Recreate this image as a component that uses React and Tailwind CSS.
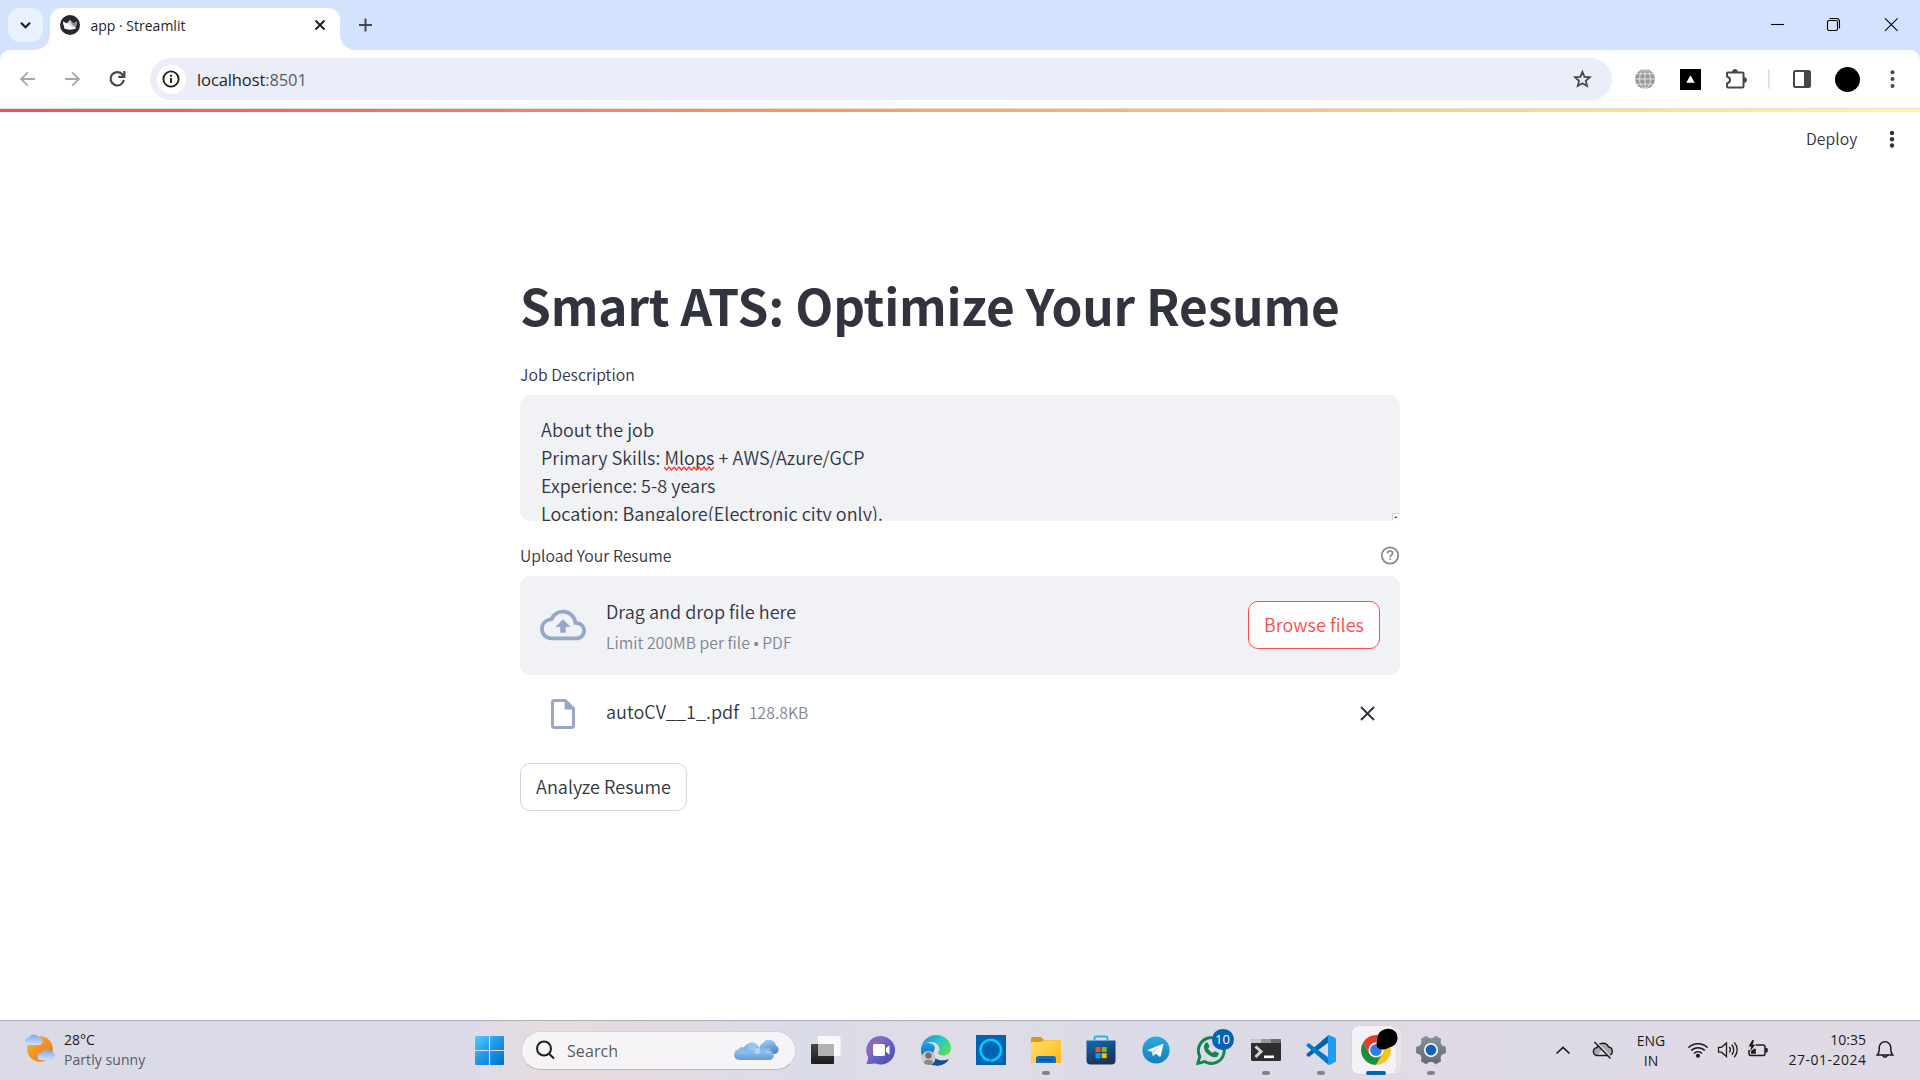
import React from "react";

/* ---------- Browser chrome ---------- */

function TabStrip() {
  return (
    <div className="flex h-[50px] bg-[#d3e3fd]">
      <div className="mt-2 ml-2 flex h-[34px] w-[35px] items-center justify-center rounded-xl bg-[#e9f0fe]">
        <svg className="h-[35px] w-[35px]" viewBox="0 0 35 35" fill="none" stroke="#1f1f1f" strokeWidth="2.2">
          <path d="M13 14.8l4.5 4.5 4.5-4.5" />
        </svg>
      </div>
      <div className="relative mt-2 ml-[7px] flex h-[42px] w-[290px] items-center rounded-t-xl bg-white pb-2">
        <svg className="absolute bottom-0 -left-[15px] h-[15px] w-[15px]" viewBox="0 0 15 15">
          <path d="M15 0v15H0C8 15 15 8 15 0z" fill="#fff" />
        </svg>
        <svg className="absolute -right-[15px] bottom-0 h-[15px] w-[15px]" viewBox="0 0 15 15">
          <path d="M0 0v15h15C7 15 0 8 0 0z" fill="#fff" />
        </svg>
        <svg className="ml-[10px] h-5 w-5 shrink-0" viewBox="0 0 20 20">
          <circle cx="10" cy="10" r="10" fill="#262730" />
          <path d="M2.8 6.6l4 2L10 4.8l3.2 3.8 4-2-1.9 7.2q-5.3 1.4-10.6 0z" fill="#d9d9d9" />
          <path d="M10 4.8l3.2 3.8 4-2-1.4 5.3C12 10.8 11 8 10 4.8z" fill="#8f8f93" />
          <path d="M2.8 6.6l4 2L12 12l3.6.6-.3 1.2q-5.3 1.4-10.6 0z" fill="#fff" />
        </svg>
        <span className="ml-[10.5px] w-[220px] pt-[2px] font-['Open_Sans',sans-serif] text-sm leading-5 text-[#1f1f1f]">
          app · Streamlit
        </span>
        <svg className="h-[18px] w-[18px] shrink-0" viewBox="0 0 18 18" stroke="#1f1f1f" strokeWidth="1.9">
          <path d="M4.5 4.5l9 9M13.5 4.5l-9 9" />
        </svg>
      </div>
      <svg className="mt-[15px] ml-[15px] h-5 w-5" viewBox="0 0 20 20" stroke="#474747" strokeWidth="2">
        <path d="M4 10h13M10.5 3.5v13" />
      </svg>
      <svg className="mt-[14px] ml-auto h-[22px] w-[150px]" viewBox="0 0 150 22" fill="none" stroke="#000" strokeWidth="1.1">
        <path d="M1 10.5h13" />
        <rect x="57.5" y="6.5" width="10" height="10" rx="1.5" />
        <path d="M59.5 4.5h7a3 3 0 0 1 3 3v7" />
        <path d="M115 4.3l12.6 12.6M127.6 4.3L115 16.9" />
      </svg>
    </div>
  );
}

function Toolbar() {
  return (
    <div className="bg-[#d3e3fd]">
      <div className="flex h-[58px] items-center rounded-t-[10px] bg-white">
        <svg className="ml-[17px] h-5 w-5" viewBox="0 0 20 20" fill="none" stroke="#a9a9a9" strokeWidth="1.9">
          <path d="M18 10H4.5M10.8 3.3L4.1 10l6.7 6.7" />
        </svg>
        <svg className="ml-[25px] h-5 w-5" viewBox="0 0 20 20" fill="none" stroke="#a9a9a9" strokeWidth="1.9">
          <path d="M3 10h13.5M10.2 3.3l6.7 6.7-6.7 6.7" />
        </svg>
        <svg className="ml-[25px] h-5 w-5" viewBox="0 0 20 20" fill="none" stroke="#474747" strokeWidth="2.2">
          <path d="M16.9 10.9a6.7 6.7 0 1 1-1.7-5.7l1.5 1.7" />
          <path d="M17.3 2v5.9h-6" />
        </svg>
        <div className="ml-[23px] flex h-[42px] w-[1462px] items-center rounded-full bg-[#ebeef8]">
          <div className="ml-[6.5px] flex h-[29px] w-[29px] items-center justify-center rounded-full bg-white">
            <svg className="h-[18px] w-[18px]" viewBox="0 0 18 18" fill="none" stroke="#1f1f1f" strokeWidth="1.9">
              <circle cx="9" cy="9" r="7.6" />
              <path d="M9 8v5M9 4.8v1.9" />
            </svg>
          </div>
          <span className="ml-[11.5px] pt-[2px] font-['Open_Sans',sans-serif] text-[16.5px] leading-6 tracking-[-0.1px] text-[#1f1f1f]">
            localhost<span className="text-[#5a5d63]">:8501</span>
          </span>
          <svg className="mr-[20px] ml-auto h-5 w-5" viewBox="0 0 20 20" fill="none" stroke="#474747" strokeWidth="1.8">
            <path d="M10.4 2.9l2.1 4.9 5.3.46-4 3.5 1.2 5.2-4.6-2.77-4.6 2.77 1.2-5.2-4-3.5 5.3-.46z" />
          </svg>
        </div>
        <svg className="ml-[23px] h-5 w-5" viewBox="0 0 20 20" fill="none">
          <circle cx="10" cy="10" r="10" fill="#999" />
          <g stroke="#e3e3e3" strokeWidth="1">
            <path d="M10 0v20M0 10h20M2 4.8h16M2 15.2h16" />
            <ellipse cx="10" cy="10" rx="5.4" ry="9.6" />
          </g>
        </svg>
        <svg className="ml-[25px] h-[21px] w-[21px]" viewBox="0 0 21 21">
          <path d="M0 0h21v21H0z" fill="#000" />
          <path d="M10.5 6.2l4.2 7.5H6.3z" fill="#fff" />
        </svg>
        <svg className="ml-[24px] h-[22px] w-[22px]" viewBox="0 0 22 22">
          <path
            d="M2.5 4.5H17.5a1 1 0 0 1 1 1V18.5a1 1 0 0 1-1 1H3a1 1 0 0 1-1-1V15.5C6 14.5 6 9.5 2 8.5V5.5a1 1 0 0 1 .5-1z"
            fill="none"
            stroke="#474747"
            strokeWidth="2"
          />
          <path d="M7.5 4a2.5 2.5 0 0 1 5 0zM19 9.5a2.5 2.5 0 0 1 0 5z" fill="#474747" stroke="#474747" />
        </svg>
        <div className="ml-[21px] h-5 w-[2px] rounded-full bg-[#d3e3fd]" />
        <svg className="ml-[23px] h-[18px] w-[18px]" viewBox="0 0 18 18">
          <rect x="1" y="1" width="16" height="16" rx="1.5" fill="none" stroke="#474747" strokeWidth="2" />
          <path d="M11 1h6v16h-6z" fill="#474747" />
        </svg>
        <div className="ml-[24px] h-[25px] w-[25px] rounded-full bg-black" />
        <svg className="ml-[22px] h-5 w-5" viewBox="0 0 20 20" fill="#474747">
          <circle cx="10.5" cy="3.2" r="2" />
          <circle cx="10.5" cy="10" r="2" />
          <circle cx="10.5" cy="16.9" r="2" />
        </svg>
      </div>
    </div>
  );
}

/* ---------- Streamlit app ---------- */

function AppHeader() {
  return (
    <div className="flex h-[54px] items-center text-[#31333f]">
      <span className="ml-[1806px] text-[15.75px] leading-6 font-[350] tracking-[0.08px]">Deploy</span>
      <svg className="ml-[24px] h-5 w-5" viewBox="0 0 20 20" fill="#31333f">
        <circle cx="11" cy="4" r="2.2" />
        <circle cx="11" cy="10.3" r="2.2" />
        <circle cx="11" cy="16.5" r="2.2" />
      </svg>
    </div>
  );
}

function JobDescription() {
  return (
    <div className="relative h-[126px] overflow-hidden rounded-[10px] bg-[#f0f2f6] pt-[20px] pl-[21px] text-[18px] leading-[28px] tracking-[0.05px]">
      <div>About the job</div>
      <div>
        Primary Skills:{" "}
        <span className="relative">
          Mlops
          <svg className="absolute top-[22px] left-0 h-[5px] w-[50px]" viewBox="0 0 50 5" fill="none" stroke="#f33" strokeWidth="1.2">
            <path d="M0 1l2.5 3L5 1l2.5 3L10 1l2.5 3L15 1l2.5 3L20 1l2.5 3L25 1l2.5 3L30 1l2.5 3L35 1l2.5 3L40 1l2.5 3L45 1l2.5 3L50 1" />
          </svg>
        </span>{" "}
        + AWS/Azure/GCP
      </div>
      <div>Experience: 5-8 years</div>
      <div>Location: Bangalore(Electronic city only).</div>
      <svg className="absolute right-0 bottom-0 h-2 w-2" viewBox="0 0 8 8">
        <path d="M0 0h8v3Q8 8 3 8H0z" fill="#fff" />
        <path d="M.5 8V.5H8" fill="none" stroke="#cfd0d4" />
        <path d="M2 5l1.5-1.5H5.5L4 5z" fill="#333" />
      </svg>
    </div>
  );
}

function Uploader() {
  return (
    <>
      <div className="mt-[21px] flex h-[26px] items-center">
        <span className="pt-[2px] text-[15.75px] leading-[26px] tracking-[0.03px]">Upload Your Resume</span>
        <svg className="ml-auto h-5 w-5" viewBox="0 0 20 20" fill="none" stroke="#84868f" strokeWidth="1.7">
          <circle cx="10" cy="10.5" r="8.2" />
          <path d="M7.4 8.3c.2-1.5 1.2-2.3 2.6-2.3s2.6.8 2.6 2.2c0 1.900-2.5 2-2.5 4M10.1 13.400v1.7" />
        </svg>
      </div>
      <div className="mt-2 flex h-[99px] items-center rounded-[10px] bg-[#f0f2f6] px-5 pb-px">
        <svg className="h-[46px] w-[46px]" viewBox="0 0 24 24" fill="#98a6c8">
          <path d="M19.35 10.04A7.49 7.49 0 0 0 12 4C9.11 4 6.6 5.64 5.35 8.04A5.994 5.994 0 0 0 0 14c0 3.31 2.69 6 6 6h13c2.76 0 5-2.24 5-5 0-2.64-2.05-4.78-4.65-4.96zM19 18H6c-2.21 0-4-1.79-4-4 0-2.05 1.53-3.76 3.56-3.97l1.07-.11.5-.95A5.469 5.469 0 0 1 12 6c2.62 0 4.88 1.86 5.39 4.43l.3 1.5 1.53.11A2.98 2.98 0 0 1 22 15c0 1.65-1.35 3-3 3zM8 13h2.55v3h2.9v-3H16l-4-4z" />
        </svg>
        <div className="ml-5 pt-[2px]">
          <div className="text-[18px] leading-[28px] tracking-[0.05px]">Drag and drop file here</div>
          <div className="mt-[5px] text-[15.75px] leading-[25px] tracking-[0.03px] text-[#808495]">
            Limit 200MB per file <span className="font-['Noto_Sans',sans-serif] text-[14px] font-semibold">•</span> PDF
          </div>
        </div>
        <div className="ml-auto flex h-[48px] w-[132px] items-center justify-center rounded-[10px] border border-[#ff4b4b] bg-white pb-[2px] text-[18px] leading-[28px] tracking-[0.05px] text-[#ff4b4b]">
          Browse files
        </div>
      </div>
      <div className="mt-[19px] flex h-[40px] items-center px-5">
        <svg className="ml-[5px] h-[36px] w-[36px]" viewBox="0 0 24 24" fill="#98a6c8">
          <path d="M14 2H6c-1.1 0-1.99.9-1.99 2L4 20c0 1.1.89 2 1.99 2H18c1.1 0 2-.9 2-2V8l-6-6zM6 20V4h7v5h5v11H6z" />
        </svg>
        <div className="ml-[25px] flex items-baseline pb-[5px] leading-[28px]">
          <span className="text-[18px] tracking-[0.04px]">autoCV__1_.pdf</span>
          <span className="ml-[10px] text-[15.75px] tracking-[0.04px] text-[#808495]">128.8KB</span>
        </div>
        <svg className="mr-[2.5px] ml-auto h-5 w-5" viewBox="0 0 20 20" stroke="#31333f" strokeWidth="2">
          <path d="M3 3l13 13M16 3L3 16" />
        </svg>
      </div>
      <div className="mt-[29px] flex h-[48px] w-[167px] items-center justify-center rounded-[10px] border border-[#d6d6d9] bg-white pb-[2px] text-[18px] leading-[28px] tracking-[0.05px]">
        Analyze Resume
      </div>
    </>
  );
}

/* ---------- Windows taskbar ---------- */

function AppSlot({ children, mark }) {
  return (
    <div className="relative flex w-[55px] items-center justify-center">
      {children}
      {mark && <div className="absolute bottom-[3px] left-[23.5px] h-1 w-2 rounded-full bg-[#85828c]" />}
    </div>
  );
}

function Weather() {
  return (
    <div className="flex w-[475px] items-start">
      <svg className="mt-[10px] ml-[25px] h-[34px] w-[32px]" viewBox="0 0 32 34">
        <defs>
          <linearGradient id="sun" x1="0" y1="0" x2="1" y2="1">
            <stop offset="0" stopColor="#f5b62a" />
            <stop offset="1" stopColor="#f0701c" />
          </linearGradient>
          <linearGradient id="cloud" x1="0" y1="0" x2="0" y2="1">
            <stop offset="0" stopColor="#7ea8ea" />
            <stop offset="1" stopColor="#cfe0fa" />
          </linearGradient>
        </defs>
        <circle cx="15" cy="18" r="12.8" fill="url(#sun)" />
        <path d="M3.5 14a3.6 3.6 0 0 1 .3-7.3A5.3 5.3 0 0 1 13 5.6a4.3 4.3 0 0 1 1.5 8.4z" fill="url(#cloud)" />
        <path d="M16 29.2a3.6 3.6 0 0 1 .3-7.3 5.3 5.3 0 0 1 9.2-1.1 4.3 4.3 0 0 1 1.5 8.4z" fill="url(#cloud)" />
      </svg>
      <div className="mt-[9px] ml-[7px] text-sm leading-5">
        <div className="text-[#1b1b1d]">28°C</div>
        <div className="tracking-[0.06px] text-[#5c5a62]">Partly sunny</div>
      </div>
    </div>
  );
}

function SearchBox() {
  return (
    <div className="mt-[9.5px] ml-[17px] flex h-[39px] w-[275px] items-center rounded-full border border-[#d6d0da] border-b-[#bcb8c0] bg-[#f6f4f7]">
      <svg className="ml-[14px] h-5 w-5" viewBox="0 0 20 20" fill="none" stroke="#1f1f1f" strokeWidth="2">
        <circle cx="8" cy="8.5" r="7" />
        <path d="M12.8 13.5l5.2 5" />
      </svg>
      <span className="ml-[11px] pt-[2px] text-base leading-6 tracking-[0.1px] text-[#5b5a5f]">Search</span>
      <svg className="mr-[16px] ml-auto h-[24px] w-[46px]" viewBox="0 0 46 24">
        <defs>
          <linearGradient id="cl" x1="0" y1="0" x2="0.3" y2="1">
            <stop offset="0" stopColor="#a9d2f5" />
            <stop offset="1" stopColor="#4f8cc9" />
          </linearGradient>
          <linearGradient id="cl2" x1="0" y1="0" x2="0" y2="1">
            <stop offset="0" stopColor="#79b2e6" />
            <stop offset="0.55" stopColor="#8abdea" />
            <stop offset="1" stopColor="#5f9cd8" />
          </linearGradient>
        </defs>
        <path d="M27 13a6 6 0 0 1 3-8 7.2 7.2 0 0 1 13 2.5 4.5 4.5 0 0 1-1 8.5H30z" fill="url(#cl)" />
        <path d="M6 22a5.3 5.3 0 0 1-.5-10.5 4 4 0 0 1 5.5-2 8.5 8.5 0 0 1 15.5 1 5 5 0 0 1 8 2.5 4.5 4.5 0 0 1 3 9z" fill="url(#cl2)" />
        <circle cx="19" cy="8.5" r="4.5" fill="#a6d0f3" opacity=".6" />
        <circle cx="24.5" cy="13" r="3" fill="#c2dff7" opacity=".7" />
        <circle cx="35" cy="13" r="3" fill="#a6d0f3" opacity=".5" />
      </svg>
    </div>
  );
}

function PinnedApps() {
  return (
    <div className="ml-[2.5px] flex h-[57px]">
      <AppSlot>
        <svg className="h-[30px] w-[30px]" viewBox="0 0 30 30">
          <defs>
            <linearGradient id="tv" x1="0" y1="0" x2="0" y2="1">
              <stop offset="0" stopColor="#454545" />
              <stop offset="1" stopColor="#1c1c1c" />
            </linearGradient>
          </defs>
          <rect x="0" y="9" width="23" height="20" rx="1" fill="url(#tv)" />
          <rect x="7" y="1" width="22.5" height="20" rx="1" fill="#f8f8f8" />
          <path d="M7 9h16v12H8a1 1 0 0 1-1-1z" fill="#b2b2b2" />
        </svg>
      </AppSlot>
      <AppSlot>
        <svg className="h-[30px] w-[30px]" viewBox="0 0 30 30">
          <defs>
            <linearGradient id="tm" x1="0" y1="0" x2="1" y2="1">
              <stop offset="0" stopColor="#7b62b8" />
              <stop offset=".3" stopColor="#8a68c0" />
              <stop offset=".6" stopColor="#5b5fc7" />
              <stop offset="1" stopColor="#4b49a8" />
            </linearGradient>
          </defs>
          <path d="M15 1a14.3 14.3 0 1 1-5.5 27.6Q5 29.3.5 29l1.8-6.5A14.3 14.3 0 0 1 15 1z" fill="url(#tm)" />
          <rect x="7" y="9" width="12" height="12" rx="1.8" fill="#fff" />
          <path d="M20 13.3l3.5-3v9.4l-3.5-3z" fill="#fff" />
        </svg>
      </AppSlot>
      <AppSlot>
        <svg className="h-[32px] w-[32px]" viewBox="0 0 32 32">
          <defs>
            <linearGradient id="eg" x1="0" y1="0.2" x2="1" y2="0.7">
              <stop offset="0" stopColor="#1c8fd6" />
              <stop offset=".5" stopColor="#2bc3d2" />
              <stop offset="1" stopColor="#5fe04f" />
            </linearGradient>
            <linearGradient id="eb" x1="0" y1="0" x2="0" y2="1">
              <stop offset="0" stopColor="#1b9de2" />
              <stop offset="1" stopColor="#0f56a8" />
            </linearGradient>
          </defs>
          <path d="M1 15C1.5 9 8 8 12 10c4 2 3 5 1.5 8-2 5 4 9 10 8.5 4 0 5-1.5 5-1.5-2 4-7 6.5-12 6.5C7 31.5.5 24 1 15z" fill="url(#eb)" />
          <path d="M13.5 20c-1 5 5 7.5 10 6.5 3.5-.6 5-2 5-1-2 4-7 6-11.5 6-5-1-8-6-3.5-11.5z" fill="#124f96" />
          <path d="M1 14.5C2.5 5.5 9.5 1 16 1c8.5 0 15 6 15 13 0 5-3.5 7.5-7.5 7.5-3 0-5.5-1-5.5-2.5 0-1 1.5-1.5 1.5-4 0-3.5-3.5-7-9-7S1.5 12 1 14.5z" fill="url(#eg)" />
          <circle cx="8.5" cy="24" r="7" fill="#c9c9c9" />
          <circle cx="8.5" cy="21.5" r="3.2" fill="#77716e" />
          <path d="M3.8 29c0-4.5 9.4-4.5 9.4 0q-4.7 4-9.4 0z" fill="#8c8784" />
        </svg>
      </AppSlot>
      <AppSlot>
        <svg className="h-[30px] w-[30px]" viewBox="0 0 30 30">
          <path d="M0 0h30v30H0z" fill="#0063b1" />
          <path d="M13.8 25.3A10.2 10.2 0 1 1 18.3 24.7L14.5 26" fill="none" stroke="#00caff" strokeWidth="2.6" />
        </svg>
      </AppSlot>
      <AppSlot mark>
        <svg className="h-[30px] w-[30px]" viewBox="0 0 30 30">
          <defs>
            <linearGradient id="fo" x1="0" y1="0" x2="1" y2="1">
              <stop offset="0" stopColor="#ffdf70" />
              <stop offset="1" stopColor="#fdb913" />
            </linearGradient>
          </defs>
          <path d="M0 3.5A1.5 1.5 0 0 1 1.5 2H9q1.2 0 2 1l2 2h15.5A1.5 1.5 0 0 1 30 6.5V10H0z" fill="#dc9a0a" />
          <path d="M0 8q0-1 1-1h8.5q1 0 2-.7l1.5-1H30V28H0z" fill="url(#fo)" />
          <path d="M5 28v-4.5a2.5 2.5 0 0 1 2.5-2.5h15a2.5 2.5 0 0 1 2.5 2.5V28z" fill="#0f6fc0" />
          <path d="M8 25h13.5" stroke="#064a8c" strokeWidth="1.4" />
        </svg>
      </AppSlot>
      <AppSlot>
        <svg className="h-[30px] w-[30px]" viewBox="0 0 30 30">
          <defs>
            <linearGradient id="st" x1="0" y1="0" x2="0.4" y2="1">
              <stop offset="0" stopColor="#0f6ab8" />
              <stop offset="1" stopColor="#1c3257" />
            </linearGradient>
          </defs>
          <path d="M.5 5.5h29v20a4 4 0 0 1-4 4h-21a4 4 0 0 1-4-4z" fill="url(#st)" />
          <path d="M8.5 6V3a1.5 1.5 0 0 1 1.5-1.5h10A1.5 1.5 0 0 1 21.5 3v3" fill="none" stroke="#25b6ea" strokeWidth="1.8" />
          <path d="M9.5 12h5v5h-5z" fill="#f25022" />
          <path d="M15.7 12h5v5h-5z" fill="#7fba00" />
          <path d="M9.5 18.2h5v5h-5z" fill="#00a4ef" />
          <path d="M15.7 18.2h5v5h-5z" fill="#ffb900" />
        </svg>
      </AppSlot>
      <AppSlot>
        <svg className="h-[28px] w-[28px]" viewBox="0 0 28 28">
          <defs>
            <linearGradient id="tg" x1="0" y1="0" x2="0" y2="1">
              <stop offset="0" stopColor="#2fa8e0" />
              <stop offset="1" stopColor="#1380ba" />
            </linearGradient>
          </defs>
          <circle cx="14" cy="14" r="13.6" fill="url(#tg)" />
          <path d="M5.5 14l15-6q1-.3.8.8L18.8 20q-.3 1.2-1.4.5L13.5 17.6l-2 2.2q-.6.4-.8-.4L9.8 15.8 5.7 14.6q-.6-.3-.2-.6z" fill="#fff" />
          <path d="M9.8 15.8l8.2-5.3-6.2 6-.5 3.3z" fill="#b9d6e9" />
        </svg>
      </AppSlot>
      <AppSlot>
        <svg className="h-[30px] w-[30px]" viewBox="0 0 30 30">
          <path d="M1.8 28.4l2-7A12.9 12.9 0 1 1 8.6 26.6z" fill="none" stroke="#14844f" strokeWidth="2.9" />
          <path
            d="M10 7.5q1-.5 1.7.2l1.7 3.4q.2.7-1.3 2.4 1.5 3 4.7 4.5 1.7-2 2.3-1.7l3.4 1.7q.5.3.2 1.5-1 2.8-4.2 2.7C12 21.5 7.5 15.5 8 11.5q.2-2.5 2-4z"
            fill="#14844f"
          />
        </svg>
        <div className="absolute top-[8px] left-[28px] flex h-[21px] w-[22px] items-center justify-center rounded-full bg-[#0063b1] text-[13px] leading-none text-white">
          10
        </div>
      </AppSlot>
      <AppSlot mark>
        <svg className="h-[30px] w-[30px]" viewBox="0 0 30 30">
          <rect x="0" y="4" width="30" height="22" rx="1.5" fill="#2e2e2e" />
          <path d="M1.5 4H10v4H0V5.5A1.5 1.5 0 0 1 1.5 4z" fill="#c9c9c9" />
          <path d="M10 4h10v4H10z" fill="#989898" />
          <path d="M20 4h8.5A1.5 1.5 0 0 1 30 5.5V8H20z" fill="#6b6b6b" />
          <path d="M4.5 11.5l5.5 5-5.5 5.500" fill="none" stroke="#d4d4d4" strokeWidth="3" />
          <path d="M13 21.8h10" stroke="#fff" strokeWidth="2.6" />
        </svg>
      </AppSlot>
      <AppSlot mark>
        <svg className="h-[30px] w-[30px]" viewBox="0 0 30 30">
          <path d="M.6 18.9L22.5 0v7.6L3.4 21.5q-.8.5-1.5 0L.6 20.2q-.6-.7 0-1.3z" fill="#0065a9" />
          <path d="M.6 11.1L22.5 30v-7.6L3.4 8.5q-.8-.5-1.5 0L.6 9.8q-.6.7 0 1.3z" fill="#007acc" />
          <path d="M22.5.2q.5-.3 1 0l5.5 2.6q1 .5 1 1.6v21.2q0 1.1-1 1.6l-5.5 2.6q-.5.3-1 0l-1.5-1.4q1 .5 1-1V2.6q0-1.5-1-1z" fill="#1f9cf0" />
        </svg>
      </AppSlot>
      <div className="relative flex w-[55px] items-center justify-center">
        <div className="absolute top-[6px] left-[6px] h-[47px] w-[46px] rounded-md bg-[#e9e4ec] shadow-[0_0_1px_#b9b4bd]" />
        <div className="absolute top-[5px] left-[3px] h-[48px] w-[44px] rounded-md bg-[#f5f2f7] shadow-[0_0_1px_#a9a4ad]" />
        <svg className="relative -left-[0.5px] h-[30px] w-[30px]" viewBox="0 0 30 30">
          <circle cx="15" cy="15" r="15" fill="#fff" />
          <path d="M15 7.5L27.99 7.5A15 15 0 0 1 15 30L21.5 18.75z" fill="#fcc31e" />
          <path d="M21.5 18.75L15 30A15 15 0 0 1 2.01 7.5L8.5 18.75z" fill="#1e8e3e" />
          <path d="M8.5 18.75L2.01 7.5A15 15 0 0 1 27.99 7.5H15z" fill="#e33b2e" />
          <circle cx="15" cy="15" r="7.5" fill="#fff" />
          <circle cx="15" cy="15" r="5.9" fill="#2f7bea" />
        </svg>
        <svg className="absolute top-[7px] left-[26px] h-[24px] w-[24px]" viewBox="0 0 24 24">
          <path d="M13 .8C18 .3 22.5 4 22.5 9.5S19.500 18.500 14 19.500C11 21.800 6 22.200 3 20 .5 17.500 2 13.500 2.500 11 2 5 7 1.200 13 .8z" fill="#000" />
        </svg>
        <div className="absolute bottom-[3px] left-[17px] h-1 w-5 rounded-full bg-[#0063b1]" />
      </div>
      <AppSlot mark>
        <svg className="h-[30px] w-[30px]" viewBox="-15 -15 30 30">
          <defs>
            <linearGradient id="gr" x1="0" y1="-15" x2="0" y2="15" gradientUnits="userSpaceOnUse">
              <stop offset="0" stopColor="#8a949b" />
              <stop offset="1" stopColor="#5f6970" />
            </linearGradient>
          </defs>
          <path
            d="M14.2-2.5V2.5L11 3.8Q9 5.5 8.9 7.6L9.3 11 4.9 13.5 2.2 11.5Q0 10.6-2.2 11.5L-4.9 13.5-9.3 11-8.9 7.6Q-9 5.5-11 3.8L-14.2 2.5V-2.5L-11-3.8Q-9-5.5-8.9-7.6L-9.3-11-4.9-13.5-2.2-11.5Q0-10.6 2.2-11.5L4.9-13.5 9.3-11 8.9-7.6Q9-5.5 11-3.8z"
            fill="url(#gr)"
            stroke="url(#gr)"
            strokeWidth="1.4"
            strokeLinejoin="round"
          />
          <circle r="7" fill="#fff" />
          <circle r="5.4" fill="#0f63b5" />
        </svg>
      </AppSlot>
    </div>
  );
}

function Tray() {
  return (
    <div className="ml-auto flex h-[58px] items-center text-sm leading-5 text-[#1b1b1d]">
      <svg className="h-[20px] w-[20px]" viewBox="0 0 20 20" fill="none" stroke="#1b1b1d" strokeWidth="1.7">
        <path d="M3.5 13.5l6.5-6 6.5 6" />
      </svg>
      <svg className="ml-[19px] h-[22px] w-[22px]" viewBox="0 0 22 22" fill="none">
        <path d="M5.5 16.5a4 4 0 0 1-.3-8A6 6 0 0 1 16.5 8a4.3 4.3 0 0 1 .3 8.5z" fill="#aaa8ae" stroke="#1b1b1d" strokeWidth="1.4" />
        <path d="M6 15.5L10 10l6 5.5z" fill="#dedbe4" />
        <path d="M3.5 2.5l16 16.5" stroke="#dedbe4" strokeWidth="2" />
        <path d="M2.5 3l16 16.5" stroke="#1b1b1d" strokeWidth="1.5" />
      </svg>
      <div className="ml-[7px] w-[60px] pt-[1px] text-center">
        <div>ENG</div>
        <div>IN</div>
      </div>
      <svg className="ml-[6px] h-[22px] w-[22px]" viewBox="0 0 22 22" fill="none" stroke="#1b1b1d" strokeWidth="1.5">
        <path d="M1.5 8.7a13.3 13.3 0 0 1 19 0M4.2 11.6a9.4 9.4 0 0 1 13.6 0M7 14.4a5.5 5.5 0 0 1 8 0" />
        <circle cx="11" cy="16.7" r="1.3" fill="#1b1b1d" />
      </svg>
      <svg className="ml-[8px] h-[22px] w-[22px]" viewBox="0 0 22 22" fill="none" stroke="#1b1b1d" strokeWidth="1.3">
        <path d="M1.5 8.3h3l5-4.3v13.5l-5-4.3h-3zM12.2 8a4 4 0 0 1 0 5.5M14.8 5.7a7.5 7.5 0 0 1 0 10M17.3 3.4a11 11 0 0 1 0 14.8" />
      </svg>
      <svg className="ml-[8px] h-[22px] w-[22px]" viewBox="0 0 22 22" fill="none">
        <path d="M8.5 6H16a2 2 0 0 1 2 2v6.5a2 2 0 0 1-2 2H4a2 2 0 0 1-2-2V11" stroke="#1b1b1d" strokeWidth="1.5" />
        <path d="M4 14.8v-2.5l3-2.5h1.8v5z" fill="#1b1b1d" />
        <path d="M18.5 9h1.2q1 0 1 1v2.5q0 1-1 1h-1.2z" fill="#1b1b1d" />
        <path d="M5.5.8L1.5 7.5h2.7L3 12.5l5.3-6.8H5.7L7 1.5z" fill="#1b1b1d" />
      </svg>
      <div className="ml-[17px] w-[80px] text-right">
        <div>10:35</div>
        <div className="-mr-[0.5px] tracking-[0.5px]">27-01-2024</div>
      </div>
      <svg className="mr-[24px] ml-[8px] h-[22px] w-[22px]" viewBox="0 0 22 22" fill="none" stroke="#1b1b1d" strokeWidth="1.5">
        <path d="M3.3 16c1.3-1.5 1.9-3 1.9-5.5V8.6a5.8 5.8 0 0 1 11.6 0v1.9c0 2.5.6 4 1.9 5.5zM8.8 16.5a2.3 2.3 0 0 0 4.4 0" />
      </svg>
    </div>
  );
}

function Taskbar() {
  return (
    <div className="mt-auto flex h-[60px] shrink-0 border-t border-[#adabb3] bg-[linear-gradient(90deg,#dbdae7_0%,#dbdae7_20%,#dcdae9_24%,#e6dce0_28%,#e3dae2_34%,#dbdce9_42%,#dfdce5_50%,#dadbe8_60%,#dcdae6_68%,#e2dae5_74%,#dddae6_80%,#e1dae5_92%,#dfdae6_100%)] font-['Open_Sans',sans-serif]">
      <Weather />
      <svg className="mt-[15px] h-[29px] w-[29px]" viewBox="0 0 29 29">
        <defs>
          <linearGradient id="win" x1="0" y1="0" x2="29" y2="29" gradientUnits="userSpaceOnUse">
            <stop offset="0" stopColor="#4fd0fb" />
            <stop offset=".5" stopColor="#1b97e4" />
            <stop offset="1" stopColor="#0070cf" />
          </linearGradient>
        </defs>
        <path d="M1 0h12.9v13.9H0V1a1 1 0 0 1 1-1zM15.1 0H28a1 1 0 0 1 1 1v12.9H15.1zM0 15.1h13.9V29H1a1 1 0 0 1-1-1zM15.1 15.1H29V28a1 1 0 0 1-1 1H15.1z" fill="url(#win)" />
      </svg>
      <SearchBox />
      <PinnedApps />
      <Tray />
    </div>
  );
}

export default function App() {
  return (
    <div className="flex h-[1080px] w-[1920px] flex-col overflow-hidden bg-white font-['Noto_Sans_CJK_SC',sans-serif]">
      <TabStrip />
      <Toolbar />
      <div className="h-px bg-[#dcdfe4]" />
      <div className="h-[3px] bg-[linear-gradient(90deg,#ff4b4b,#fffd80)]" />
      <AppHeader />
      <main className="mx-auto mt-[106px] w-[880px] font-[350] text-[#31333f]">
        <h1 className="text-[49.5px] leading-[66px] font-bold tracking-[-0.16px] whitespace-nowrap">
          Smart ATS: Optimize Your Resume
        </h1>
        <div className="mt-[24px] mb-[7px] h-[26px] text-[15.75px] leading-[26px] tracking-[0.03px]">Job Description</div>
        <JobDescription />
        <Uploader />
      </main>
      <Taskbar />
    </div>
  );
}
